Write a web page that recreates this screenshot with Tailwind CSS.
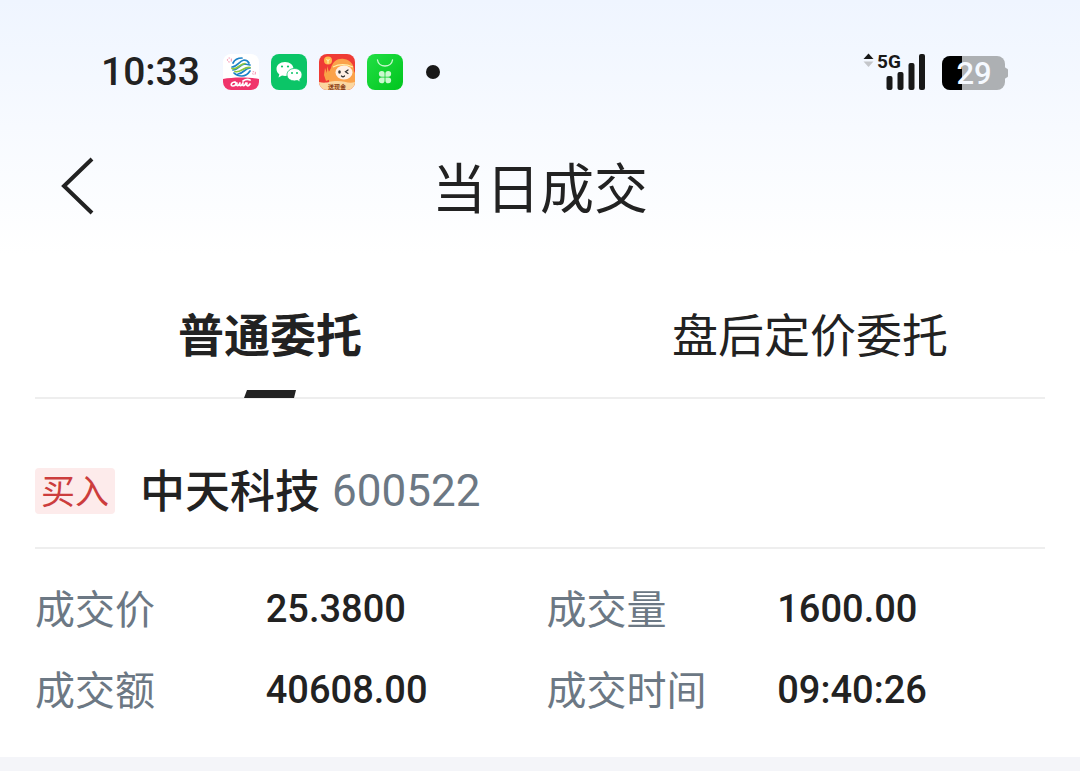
<!DOCTYPE html>
<html lang="zh-CN">

<head>
    <meta charset="UTF-8">
    <meta name="viewport" content="width=device-width, initial-scale=1.0">
    <title>当日成交</title>
    <script src="https://cdn.jsdelivr.net/npm/@tailwindcss/browser@4"></script>
</head>

<body class="min-h-screen flex flex-col bg-[#f4f5f9] text-[#222222] font-['Noto_Sans_CJK_SC',sans-serif]">
    <div class="bg-white">
        <div class="bg-linear-to-b from-[#eff5ff] to-white pb-[26px]">
            <!-- Status bar -->
            <div class="flex items-center justify-between h-36 pl-[101px] pr-[72px]">
                <div class="flex items-center">
                    <span class="w-[122px] text-[39px] leading-12 font-medium font-[Roboto,sans-serif]">10:33</span>
                    <div class="flex items-center gap-3">
                        <!-- China Mobile -->
                        <svg class="w-9 h-9" viewBox="0 0 36 36">
                            <clipPath id="tile"><rect width="36" height="36" rx="8" /></clipPath>
                            <g clip-path="url(#tile)">
                                <rect width="36" height="36" fill="#fff" />
                                <g fill="none" stroke-width="1.7" stroke-linecap="round">
                                    <path stroke="#1c83c6" d="M10 9c2-4 6-5 9-5M9 13c5 0 7-6 12-7 2 0 4 1 5 3M10 16c5 0 7-6 12-6l5 1M11 19c2 2 5 3 8 3M27 14c-5 0-7 6-12 6M27 17c-2 3-4 5-8 5" />
                                    <path stroke="#8cc63f" d="M9 14.500c5 2 8-5 13-5M12 17.500c5 2 9-5 15-4" />
                                </g>
                                <path fill="#f0346b" d="M0 25c10-2 25-2 36 0v11H0z" />
                                <path fill="none" stroke="#fff" stroke-width="1.700" stroke-linecap="round" d="M12 28c-4 0-5 4-2 4s4-3 2-4m2 1c-1 3 1 4 3 0m0 0c-1 3 1 4 3 0m0 0c-1 3 1 4 3 0m-3-2c3-2 5-2 7-1m-3 3c-1 3 1 4 3 1" />
                                <g fill="none" stroke="#f7a3bc" stroke-width="1.200" stroke-dasharray="1.500 1">
                                    <circle cx="6.500" cy="6" r="2" />
                                    <circle cx="31" cy="19" r="1.500" />
                                </g>
                            </g>
                        </svg>
                        <!-- WeChat -->
                        <svg class="w-9 h-9" viewBox="0 0 36 36">
                            <rect width="36" height="36" rx="8" fill="#0bc567" />
                            <path fill="#fff" d="M14 8c5 0 8.500 3 8.500 7s-3.500 7-8.500 7l-3-.4L7.500 23.500l.8-3.200C6.500 19 5.500 17 5.500 15c0-4 3.500-7 8.500-7z" />
                            <path fill="#fff" stroke="#0bc567" stroke-width=".8" d="M23.500 14.500c4.200 0 7.500 2.700 7.500 6.300 0 2-.9 3.600-2.300 4.700l.5 2.500-2.800-1.500-2.900.4c-4.200 0-7.500-2.500-7.500-6.100s3.300-6.300 7.500-6.300z" />
                            <g fill="#0bc567">
                                <circle cx="11" cy="12.500" r="1.100" />
                                <circle cx="17" cy="12.500" r="1.100" />
                                <circle cx="21" cy="19" r="1" />
                                <circle cx="26" cy="19" r="1" />
                            </g>
                        </svg>
                        <!-- Cash reward app -->
                        <svg class="w-9 h-9" viewBox="0 0 36 36">
                            <g clip-path="url(#tile)">
                                <rect width="36" height="36" fill="#ef3b35" />
                                <path fill="#fba24a" d="M10 30V18l2-4c2-7 7-10 13-9 7 1 10 6 10 12l1 2v13H10z" />
                                <path fill="#f9a347" d="M6 14l2 5V12l2 6 2-3v10l-5 2-2-6z" />
                                <circle cx="9" cy="6.500" r="4" fill="#ffb94d" />
                                <path fill="none" stroke="#fff0a8" stroke-width="1.200" d="M7.500 5l1.500 2 1.500-2M9 7v2.500M14 13c6-3 13-3 20 0" />
                                <ellipse cx="25" cy="18.500" rx="8.500" ry="7" fill="#fff0e4" />
                                <ellipse cx="20.500" cy="18" rx="1.300" ry="1.800" fill="#333" />
                                <path fill="none" stroke="#333" stroke-width="1.300" stroke-linecap="round" d="M29 16l-2.500 1.800L29 19.500M22.500 22c1 1 2 1 3 0" />
                                <path fill="#fbd7a0" d="M0 28c8 2 10-1 18-1s12 3 18 1v8H0z" />
                                <text x="18" y="34.500" text-anchor="middle" font-size="6" font-weight="700" fill="#8a3c14">送现金</text>
                            </g>
                        </svg>
                        <!-- App market -->
                        <svg class="w-9 h-9" viewBox="0 0 36 36">
                            <linearGradient id="market" x1="0" y1="0" x2="1" y2="1">
                                <stop stop-color="#22df45" />
                                <stop offset="1" stop-color="#00c51d" />
                            </linearGradient>
                            <rect width="36" height="36" rx="8" fill="url(#market)" />
                            <path fill="none" stroke="#c9f8cf" stroke-width="1.400" stroke-linecap="round" d="M10.500 6c1 8 14 8 15 0" />
                            <g fill="#c9f8cf">
                                <path d="M14.700 17a2.800 2.800 0 1 0 0 5.700h2.900v-2.900a2.800 2.800 0 0 0-2.900-2.800z" />
                                <path d="M21.300 17a2.800 2.800 0 1 1 0 5.700h-2.900v-2.900a2.800 2.800 0 0 1 2.900-2.800z" />
                                <path d="M14.700 29.200a2.800 2.800 0 1 1 0-5.700h2.900v2.900a2.800 2.800 0 0 1-2.900 2.800z" />
                                <path d="M21.300 29.200a2.800 2.800 0 1 0 0-5.700h-2.900v2.900a2.800 2.800 0 0 0 2.900 2.800z" />
                            </g>
                        </svg>
                    </div>
                    <span class="w-[14px] h-[14px] ml-[23px] rounded-full bg-[#181818]"></span>
                </div>
                <div class="flex items-center gap-4">
                    <!-- Signal -->
                    <svg class="w-[63px] h-10 overflow-visible" viewBox="0 0 63 40">
                        <path fill="#181818" d="M5.500 1.500l5 5.500h-10z" />
                        <path fill="#c4c6ca" d="M5.500 15l5-5.500h-10z" />
                        <text x="14" y="16" font-family="Roboto, sans-serif" font-size="19" font-weight="700" fill="#181818">5G</text>
                        <g fill="#181818">
                            <rect x="23.500" y="24" width="6" height="14" rx="2" />
                            <rect x="34.500" y="20" width="6" height="18" rx="2" />
                            <rect x="45.500" y="11" width="6" height="27" rx="2" />
                            <rect x="56" y="2" width="6" height="36" rx="2" />
                        </g>
                    </svg>
                    <!-- Battery -->
                    <svg class="w-[66px] h-9 overflow-visible" viewBox="0 0 66 36">
                        <clipPath id="cell"><rect y="2" width="63" height="34" rx="8" /></clipPath>
                        <path fill="#adb0b3" d="M62 12c0 2 4 2 4 4v6c0 2-4 2-4 4z" />
                        <g clip-path="url(#cell)">
                            <rect width="63" height="36" fill="#adb0b3" />
                            <rect width="20" height="36" fill="#000" />
                        </g>
                        <text x="32" y="30" text-anchor="middle" font-family="Roboto, sans-serif" font-size="31" font-weight="500" fill="#f5f9ff">29</text>
                    </svg>
                </div>
            </div>
            <!-- Title bar -->
            <header class="grid grid-cols-[1fr_auto_1fr] items-center h-[84px] px-[60px]">
                <button class="w-9 h-15" aria-label="返回">
                    <svg class="w-9 h-15" viewBox="0 0 36 60" fill="none" stroke="#222222" stroke-width="4">
                        <path d="M32 3L4 30l28 27" />
                    </svg>
                </button>
                <h1 class="text-[54px] leading-[84px] font-normal">当日成交</h1>
            </header>
        </div>

        <!-- Tabs -->
        <nav class="grid grid-cols-2 text-[46px] leading-[68px] text-center">
            <a href="#normal" class="flex flex-col items-center gap-6 pt-11 font-bold" aria-current="page">
                普通委托
                <svg class="w-[52px] h-2" viewBox="0 0 52 8">
                    <path fill="#222222" d="M3 0h49l-2 8H0z" />
                </svg>
            </a>
            <a href="#after" class="pt-11 font-normal">盘后定价委托</a>
        </nav>

        <main class="px-[35px]">
            <div class="flex items-center h-[152px] pt-9 -mt-px border-y-2 border-[#eeeeee]">
                <span class="w-20 h-[46px] rounded-sm bg-[#fdebeb] text-[#cc3d3d] text-[34px] leading-[44px] text-center font-normal">买入</span>
                <h2 class="ml-[25px] pb-1 text-[45px] leading-[60px] font-medium">中天科技</h2>
                <span class="ml-3 text-[44px] leading-[60px] font-[Roboto,sans-serif] text-[#6c7884]">600522</span>
            </div>
            <dl class="grid grid-cols-[231fr_281fr_231fr_268fr] gap-y-[19px] pt-7 pb-[37px] text-[40px] leading-[60px] [&_dt]:text-[#6c7884] [&_dd]:pt-0.5 [&_dd]:font-[Roboto,sans-serif] [&_dd]:text-[38px] [&_dd]:font-medium">
                <dt>成交价</dt>
                <dd>25.3800</dd>
                <dt>成交量</dt>
                <dd>1600.00</dd>
                <dt>成交额</dt>
                <dd>40608.00</dd>
                <dt>成交时间</dt>
                <dd>09:40:26</dd>
            </dl>
        </main>
    </div>
</body>

</html>
